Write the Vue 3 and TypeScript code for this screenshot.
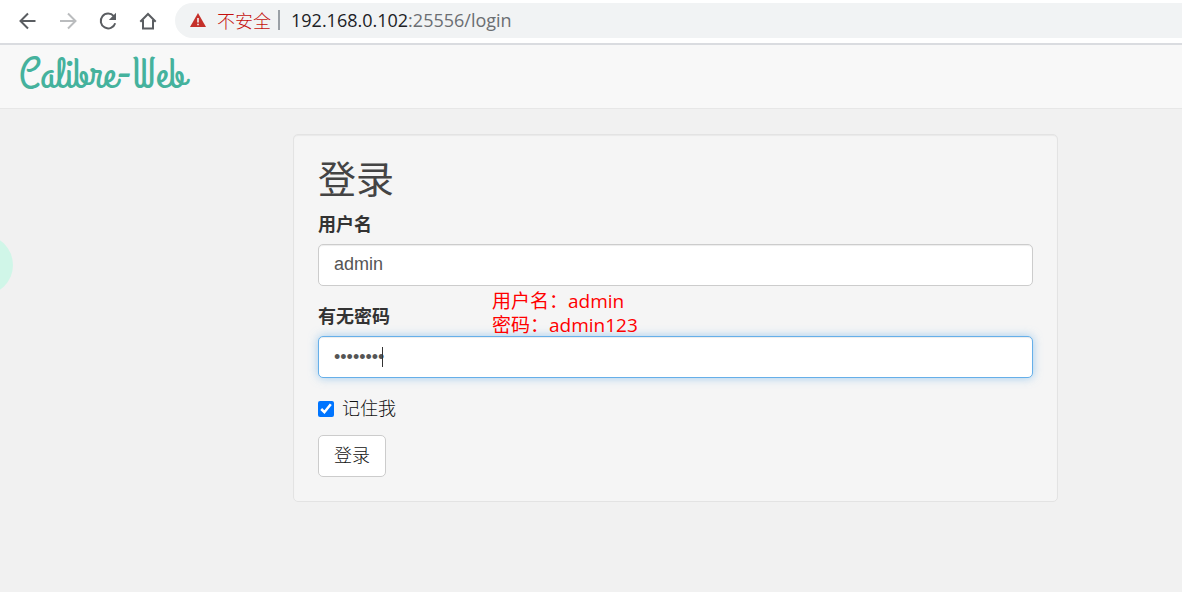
<script setup lang="ts">
import { ref } from 'vue'

const username = ref('admin')
const password = ref('admin123')
const remember = ref(true)
</script>

<template>
  <div class="page">
    <header class="toolbar">
      <button class="tool" type="button" aria-label="后退">
        <svg viewBox="0 0 20 20"><path d="M17.500 10H3M10 2.500L2.500 10l7.500 7.500" /></svg>
      </button>
      <button class="tool muted" type="button" aria-label="前进">
        <svg viewBox="0 0 20 20"><path d="M2 10h15M10 2.500l7.500 7.500-7.500 7.500" /></svg>
      </button>
      <button class="tool" type="button" aria-label="刷新">
        <svg viewBox="0 0 20 20">
          <path d="M15.800 5.200A7.400 7.400 0 1 0 17.200 12.200" />
          <path class="solid" d="M18 1.800V9h-7.200z" />
        </svg>
      </button>
      <button class="tool" type="button" aria-label="主页">
        <svg viewBox="0 0 20 20"><path d="M2.300 10.800L10 3l7.700 7.800M5 9v8.500h10V9" /></svg>
      </button>
      <div class="address">
        <svg class="warning" viewBox="0 0 16 14">
          <path fill="#c5302a" d="M8 0l8 14H0z" />
          <path fill="#f1f3f4" d="M7.200 5h1.600v4.500H7.200zM7.200 10.700h1.600v1.600H7.200z" />
        </svg>
        <span class="insecure">不安全</span>
        <span class="divider"></span>
        <span class="url"><span class="host">192.168.0.102</span>:25556/login</span>
      </div>
    </header>

    <nav class="navbar"><a class="brand" href="/">Calibre-Web</a></nav>

    <main class="content">
      <form class="well" @submit.prevent>
        <h2>登录</h2>
        <div class="group">
          <label for="username">用户名</label>
          <input id="username" v-model="username" class="control" type="text" />
        </div>
        <div class="group">
          <label for="password">有无密码</label>
          <div class="field">
            <input id="password" v-model="password" class="control active" type="password" />
            <span class="caret"></span>
          </div>
          <p class="note">用户名：admin<br />密码：admin123</p>
        </div>
        <label class="remember" for="remember">
          <input id="remember" v-model="remember" type="checkbox" />
          记住我
        </label>
        <button class="submit" type="submit">登录</button>
      </form>
    </main>
    <span class="bubble"></span>
  </div>
</template>

<style>
body {
  margin: 0;
  background: #f1f1f1;
}
</style>

<style scoped>
* {
  box-sizing: border-box;
}

.page {
  position: relative;
  min-height: 100vh;
  overflow: hidden;
  color: #333;
  font: 18px/24px "Liberation Sans", "Noto Sans CJK SC", sans-serif;
}

.toolbar {
  display: flex;
  align-items: center;
  height: 45px;
  padding: 0 0 2px 18px;
  border-bottom: 2px solid #dadce0;
  background: #fff;
}

.tool {
  width: 20px;
  height: 20px;
  margin-right: 20px;
  padding: 0;
  border: 0;
  background: none;
  color: #5a5d61;
}

.tool svg {
  display: block;
  fill: none;
  stroke: currentColor;
  stroke-width: 2;
}

.tool .solid {
  fill: currentColor;
  stroke: none;
}

.muted {
  color: #babcbe;
}

.address {
  display: flex;
  flex: 1;
  align-items: center;
  height: 35px;
  margin-left: -3px;
  padding: 0 0 2px 15px;
  border-radius: 18px 0 0 18px;
  background: #f1f3f4;
  font-family: "Open Sans", "Noto Sans CJK SC", sans-serif;
  white-space: nowrap;
}

.warning {
  width: 16px;
  height: 14px;
  margin-right: 11px;
}

.insecure {
  color: #c5100d;
  font-family: "Noto Sans CJK SC", sans-serif;
  font-weight: 300;
}

.divider {
  width: 2px;
  height: 20px;
  margin: 0 11px 0 7px;
  background: #9aa0a6;
}

.url {
  color: #6b6e72;
}

.host {
  color: #202124;
}

.navbar {
  display: flex;
  align-items: center;
  height: 64px;
  padding: 0 19px 4px;
  border-bottom: 1px solid #e7e7e7;
  background: #f8f8f8;
}

.brand {
  color: #45b29d;
  font: 44px/44px "Grand Hotel", cursive;
  text-decoration: none;
}

.content {
  padding: 25px 124px 0 293px;
}

.well {
  padding: 24px;
  border: 1px solid #e3e3e3;
  border-radius: 5px;
  background: #f5f5f5;
  box-shadow: inset 0 1px 1px rgba(0, 0, 0, 0.05);
}

h2 {
  margin: 0 0 12px;
  color: #444;
  font-size: 38px;
  font-weight: 400;
  line-height: 42px;
}

.group {
  position: relative;
  margin-bottom: 19px;
}

.group label {
  display: block;
  margin-bottom: 7px;
  font-weight: 700;
}

.field {
  position: relative;
}

.control {
  display: block;
  width: 100%;
  height: 42px;
  padding: 0 15px 2px;
  border: 1px solid #ccc;
  border-radius: 5px;
  outline: 0;
  background: #fff;
  box-shadow: inset 0 1px 1px rgba(0, 0, 0, 0.075);
  color: #555;
  font: inherit;
}

.active {
  padding-bottom: 0;
  border-color: #66afe9;
  box-shadow: inset 0 1px 1px rgba(0, 0, 0, 0.075), 0 0 10px rgba(102, 175, 233, 0.6);
}

.caret {
  position: absolute;
  top: 11px;
  left: 64px;
  width: 1px;
  height: 20px;
  background: #333;
}

.note {
  position: absolute;
  top: -16px;
  left: 174px;
  margin: 0;
  color: #f00;
  font: 19px/24px "Open Sans", "Noto Sans CJK SC", sans-serif;
  white-space: nowrap;
}

.remember {
  display: flex;
  align-items: center;
  margin-bottom: 14px;
  color: #111;
  font-weight: 300;
}

.remember input {
  width: 16px;
  height: 16px;
  margin: 0 8px 0 0;
  accent-color: #0075ff;
}

.submit {
  display: block;
  height: 42px;
  padding: 0 15px;
  border: 1px solid #ccc;
  border-radius: 5px;
  background: #fff;
  color: #111;
  font: inherit;
  font-weight: 300;
}

.bubble {
  position: absolute;
  top: 235px;
  left: -47px;
  width: 60px;
  height: 60px;
  border-radius: 50%;
  background: #d0f6e8;
}
</style>
